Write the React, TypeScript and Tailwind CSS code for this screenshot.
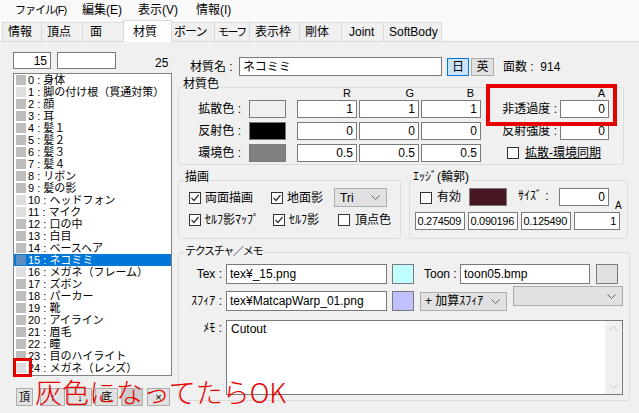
import React from 'react';

const font = "font-['Liberation_Sans','Noto_Sans_CJK_JP',sans-serif]";

const materials = [
  '身体', '脚の付け根（貫通対策）', '顔', '耳', '髪１', '髪２', '髪３', '髪４', 'リボン', '髪の影',
  'ヘッドフォン', 'マイク', '口の中', '白目', 'ベースヘア', 'ネコミミ', 'メガネ（フレーム）', 'ズボン',
  'パーカー', '靴', 'アイライン', '眉毛', '瞳', '目のハイライト', 'メガネ（レンズ）',
];
const light = [1, 10, 11, 16, 24];

function Field({ className = '', children, left }: { className?: string; children?: React.ReactNode; left?: boolean }) {
  return (
    <div
      className={`bg-white border border-[#7a7a7a] flex items-center px-[3px] leading-[14px] shrink-0 ${left ? 'justify-start' : 'justify-end'} ${className}`}
    >
      {children}
    </div>
  );
}

function Check({ on }: { on?: boolean }) {
  return (
    <span className="w-[12px] h-[12px] border border-[#333333] bg-white flex items-center justify-center shrink-0">
      {on && (
        <svg width="10" height="10" viewBox="0 0 10 10">
          <polyline points="1.5,5 4,7.5 8.5,2" fill="none" stroke="#333333" strokeWidth="1.2" />
        </svg>
      )}
    </span>
  );
}

function Chevron() {
  return (
    <svg width="9" height="5" viewBox="0 0 9 5" className="shrink-0">
      <polyline points="0.5,0.5 4.5,4.5 8.5,0.5" fill="none" stroke="#606060" strokeWidth="1" />
    </svg>
  );
}

function Group({ className, labelClass, label, children }: { className: string; labelClass: string; label: React.ReactNode; children: React.ReactNode }) {
  return (
    <div className={`relative border border-[#dcdcdc] rounded-[3px] shrink-0 ${className}`}>
      <span className={`absolute bg-[#f0f0f0] px-[1px] leading-[16px] whitespace-nowrap ${labelClass}`}>{label}</span>
      {children}
    </div>
  );
}

const tabs = [
  { t: '情報', w: 'w-[40px] pl-[5px]' },
  { t: '頂点', w: 'w-[41px] pl-[5px]' },
  { t: '面', w: 'w-[42px] pl-[7px]' },
  { t: '材質', w: 'w-[49px] pl-[9px]', sel: true },
  { t: 'ボーン', w: 'w-[45px] pl-[4px] tracking-[-1px]' },
  { t: 'モーフ', w: 'w-[35px] pl-[3px] text-[11px] tracking-[-1.5px]' },
  { t: '表示枠', w: 'w-[50px] pl-[5px]' },
  { t: '剛体', w: 'w-[42px] pl-[5px]' },
  { t: 'Joint', w: 'w-[42px] pl-[7px]' },
  { t: 'SoftBody', w: 'w-[58px] pl-[5px]' },
];

export default function App() {
  return (
    <div className={`w-[639px] h-[413px] overflow-hidden bg-[#f0f0f0] text-[12px] text-black relative ${font}`}>
      {/* Menu */}
      <div className="h-[20px] bg-[#f9f9f9] flex items-center pl-[15px] leading-[14px] whitespace-nowrap">
        <span className="w-[67px] shrink-0 text-[11px] tracking-[-1px]">ファイル(F)</span>
        <span className="w-[56px] shrink-0">編集(E)</span>
        <span className="w-[58px] shrink-0">表示(V)</span>
        <span>情報(I)</span>
      </div>

      {/* Tabs */}
      <div className="h-[22px] bg-[#f9f9f9] flex items-end pl-[2px] border-b border-[#d9d9d9] whitespace-nowrap">
        {tabs.map((tab, i) =>
          tab.sel ? (
            <div
              key={tab.t}
              className={`${tab.w} shrink-0 h-[22px] -mx-[2px] -mb-[1px] relative z-10 bg-white border border-b-0 border-[#d9d9d9] flex items-center leading-[14px]`}
            >
              {tab.t}
            </div>
          ) : (
            <div
              key={tab.t}
              className={`${tab.w} shrink-0 h-[19px] bg-[#f0f0f0] border-t border-r border-[#d9d9d9] ${i === 0 ? 'border-l' : ''} flex items-center leading-[14px] overflow-hidden`}
            >
              {tab.t}
            </div>
          ),
        )}
      </div>

      <div className="flex">
        {/* Left column */}
        <div className="w-[176px] shrink-0 flex flex-col">
          <div className="mt-[10px] h-[17px] flex items-center">
            <Field className="ml-[13px] w-[38px] h-[17px]">15</Field>
            <Field className="ml-[6px] w-[59px] h-[17px]" />
            <span className="ml-[39px] mt-[5px] leading-[14px]">25</span>
          </div>
          <div className="mt-[4px] ml-[13px] w-[159px] h-[303px] border border-[#828282] bg-white overflow-hidden text-[11px]">
            {materials.map((m, i) => {
              const sel = i === 15;
              return (
                <div key={i} className={`h-[12px] flex items-center ${sel ? 'bg-[#0078d7] text-white' : ''}`}>
                  <span
                    className={`ml-[2px] w-[10px] h-[10px] shrink-0 ${sel ? 'bg-[#5a8fc4]' : light.includes(i) ? 'bg-[#dedede]' : 'bg-[#bdbdbd]'}`}
                  />
                  <span className="ml-[2px] leading-[12px] whitespace-nowrap">
                    {i} : {m}
                  </span>
                </div>
              );
            })}
          </div>
          <div className="mt-[12px] ml-[16px] flex h-[18px] text-[11px]">
            <button className="w-[17px] h-[18px] bg-[#e1e1e1] border border-[#adadad] leading-[14px]">頂</button>
            <button className="ml-[7px] w-[25px] h-[18px] bg-[#e1e1e1] border border-[#adadad] leading-[14px]">↑</button>
            <button className="ml-[3px] w-[24px] h-[18px] bg-[#e1e1e1] border border-[#adadad] leading-[14px]">↓</button>
            <button className="ml-[3px] w-[23px] h-[18px] bg-[#e1e1e1] border border-[#adadad] leading-[14px]">底</button>
            <button className="ml-[3px] w-[22px] h-[18px] bg-[#cccccc] border border-[#adadad] leading-[14px]" />
            <button className="ml-[4px] w-[23px] h-[18px] bg-[#e1e1e1] border border-[#adadad] leading-[14px]">×</button>
          </div>
        </div>

        {/* Right column */}
        <div className="flex-1 flex flex-col">
          <div className="mt-[15px] h-[19px] flex items-center leading-[14px]">
            <span className="ml-[14px] w-[49px]">材質名 :</span>
            <Field left className="w-[203px] h-[19px]">ネコミミ</Field>
            <span className="ml-[5px] w-[22px] h-[18px] border border-[#0078d7] bg-[#cce4f7] flex items-center justify-center">日</span>
            <span className="ml-[2px] w-[23px] h-[18px] border border-[#adadad] bg-[#e1e1e1] flex items-center justify-center">英</span>
            <span className="ml-[9px]">面数 :&nbsp;&nbsp;914</span>
          </div>

          {/* 材質色 */}
          <Group className="mt-[11px] ml-[2px] w-[446px] h-[78px]" labelClass="-top-[12px] left-[3px]" label="材質色">
            <div className="flex">
              <div className="flex flex-col gap-[4px]">
                <div className="h-[8px] flex text-[11px] leading-[10px]">
                  <span className="w-[118px]" />
                  <span className="w-[60px] text-right pr-[6px]">R</span>
                  <span className="ml-[2px] w-[60px] text-right pr-[5px]">G</span>
                  <span className="ml-[2px] w-[60px] text-right pr-[7px]">B</span>
                </div>
                {[
                  { l: '拡散色 :', c: 'bg-[#f0f0f0]', v: ['1', '1', '1'] },
                  { l: '反射色 :', c: 'bg-black', v: ['0', '0', '0'] },
                  { l: '環境色 :', c: 'bg-[#808080]', v: ['0.5', '0.5', '0.5'] },
                ].map((r) => (
                  <div key={r.l} className="h-[18px] flex items-center">
                    <span className="w-[62px] text-right leading-[14px]">{r.l}</span>
                    <span className={`ml-[8px] w-[37px] h-[18px] border border-[#7a7a7a] ${r.c}`} />
                    <Field className="ml-[11px] w-[60px] h-[18px]">{r.v[0]}</Field>
                    <Field className="ml-[2px] w-[60px] h-[18px]">{r.v[1]}</Field>
                    <Field className="ml-[2px] w-[60px] h-[18px]">{r.v[2]}</Field>
                  </div>
                ))}
              </div>
              <div className="flex flex-col gap-[4px]">
                <div className="h-[8px] w-[128px] text-right pr-[4px] text-[11px] leading-[10px]">A</div>
                <div className="h-[18px] flex items-center">
                  <span className="w-[76px] text-right leading-[14px]">非透過度 :</span>
                  <Field className="ml-[3px] w-[49px] h-[18px]">0</Field>
                </div>
                <div className="h-[18px] flex items-center">
                  <span className="w-[76px] text-right leading-[14px]">反射強度 :</span>
                  <Field className="ml-[3px] w-[49px] h-[18px]">0</Field>
                </div>
                <div className="h-[18px] flex items-center">
                  <span className="ml-[26px]">
                    <Check />
                  </span>
                  <span className="ml-[6px] underline leading-[14px]">拡散-環境同期</span>
                </div>
              </div>
            </div>
          </Group>

          <div className="mt-[15px] flex">
            {/* 描画 */}
            <Group className="ml-[2px] w-[223px] h-[59px]" labelClass="-top-[12px] left-[5px]" label="描画">
              <div className="mt-[7px] h-[19px] flex items-center leading-[14px]">
                <span className="ml-[10px]"><Check on /></span>
                <span className="ml-[4px] w-[66px]">両面描画</span>
                <Check on />
                <span className="ml-[4px] w-[47px]">地面影</span>
                <span className="w-[53px] h-[19px] bg-[#e1e1e1] border border-[#adadad] flex items-center justify-between pl-[5px] pr-[6px]">
                  Tri
                  <Chevron />
                </span>
              </div>
              <div className="mt-[4px] h-[18px] flex items-center leading-[14px]">
                <span className="ml-[10px]"><Check on /></span>
                <span className="ml-[4px] w-[68px]">ｾﾙﾌ影ﾏｯﾌﾟ</span>
                <Check on />
                <span className="ml-[4px] w-[49px]">ｾﾙﾌ影</span>
                <Check />
                <span className="ml-[5px]">頂点色</span>
              </div>
            </Group>

            {/* エッジ */}
            <Group className="ml-[8px] w-[219px] h-[59px]" labelClass="-top-[12px] left-[2px]" label="ｴｯｼﾞ(輪郭)">
              <div className="mt-[7px] h-[19px] flex items-start leading-[14px]">
                <span className="ml-[10px] mt-[4px]"><Check /></span>
                <span className="ml-[5px] mt-[2px] w-[32px]">有効</span>
                <span className="w-[38px] h-[18px] border border-[#7a7a7a] bg-[#461720]" />
                <span className="ml-[11px] mt-[1px] w-[41px]">ｻｲｽﾞ :</span>
                <Field className="w-[50px] h-[18px]">0</Field>
                <span className="ml-[6px] mt-[13px] text-[10px] leading-[10px]">A</span>
              </div>
              <div className="mt-[5px] ml-[5px] h-[18px] flex gap-[3px] text-[11px] tracking-[-0.3px]">
                <Field className="w-[50px] h-[18px] px-[2px]">0.274509</Field>
                <Field className="w-[50px] h-[18px] px-[2px]">0.090196</Field>
                <Field className="w-[50px] h-[18px] px-[2px]">0.125490</Field>
                <Field className="w-[46px] h-[18px]">1</Field>
              </div>
            </Group>
          </div>

          {/* テクスチャ／メモ */}
          <Group
            className="mt-[13px] ml-[2px] w-[452px] h-[149px]"
            labelClass="-top-[10px] left-[5px] text-[11px] tracking-[-1.3px]"
            label="テクスチャ／メモ"
          >
            <div className="mt-[11px] h-[20px] flex items-center leading-[14px]">
              <span className="w-[47px] text-right pr-[4px]">Tex :</span>
              <Field left className="w-[161px] h-[20px]">tex¥_15.png</Field>
              <span className="ml-[5px] w-[22px] h-[20px] border border-[#7a7a7a] bg-[#c0ffff]" />
              <span className="ml-[10px] w-[36px]">Toon :</span>
              <Field left className="w-[130px] h-[20px]">toon05.bmp</Field>
              <span className="ml-[6px] w-[22px] h-[20px] border border-[#7a7a7a] bg-[#e1e1e1]" />
            </div>
            <div className="mt-[7px] h-[20px] flex items-center leading-[14px]">
              <span className="w-[47px] text-right pr-[4px]">ｽﾌｨｱ :</span>
              <Field left className="w-[161px] h-[20px]">tex¥MatcapWarp_01.png</Field>
              <span className="ml-[5px] w-[22px] h-[20px] border border-[#7a7a7a] bg-[#c0c0ff]" />
              <span className="ml-[6px] w-[87px] h-[19px] bg-[#e1e1e1] border border-[#adadad] flex items-center justify-between pl-[4px] pr-[6px]">
                + 加算ｽﾌｨｱ
                <Chevron />
              </span>
              <span className="ml-[6px] self-start -mt-[5px] w-[110px] h-[20px] bg-[#e1e1e1] border border-[#adadad] flex items-center justify-end pr-[6px]">
                <Chevron />
              </span>
            </div>
            <div className="mt-[9px] flex leading-[14px]">
              <span className="w-[47px] text-right pr-[4px] pt-[1px]">ﾒﾓ :</span>
              <div className="w-[397px] h-[75px] border border-[#7a7a7a] bg-white flex">
                <span className="flex-1 pl-[4px] pt-[1px]">Cutout</span>
                <div className="w-[17px] bg-[#f0f0f0] flex flex-col justify-between items-center py-[5px]">
                  <svg width="9" height="5" viewBox="0 0 9 5">
                    <polyline points="0.5,4.5 4.5,0.5 8.5,4.5" fill="none" stroke="#c8c8c8" strokeWidth="1" />
                  </svg>
                  <svg width="9" height="5" viewBox="0 0 9 5">
                    <polyline points="0.5,0.5 4.5,4.5 8.5,0.5" fill="none" stroke="#c8c8c8" strokeWidth="1" />
                  </svg>
                </div>
              </div>
            </div>
          </Group>
        </div>
      </div>

      {/* Annotations */}
      <div className="absolute left-[486px] top-[84px] w-[131px] h-[42px] border-[4px] border-[#e60000]" />
      <div className="absolute left-[13px] top-[358px] w-[19px] h-[19px] border-[3px] border-[#e60000]" />
      <div className="absolute left-[35px] top-[375px] text-[27px] leading-[34px] text-[#e60000] font-light whitespace-nowrap font-['Noto_Sans_CJK_JP',sans-serif]">
        灰色になってたらOK
      </div>
    </div>
  );
}
